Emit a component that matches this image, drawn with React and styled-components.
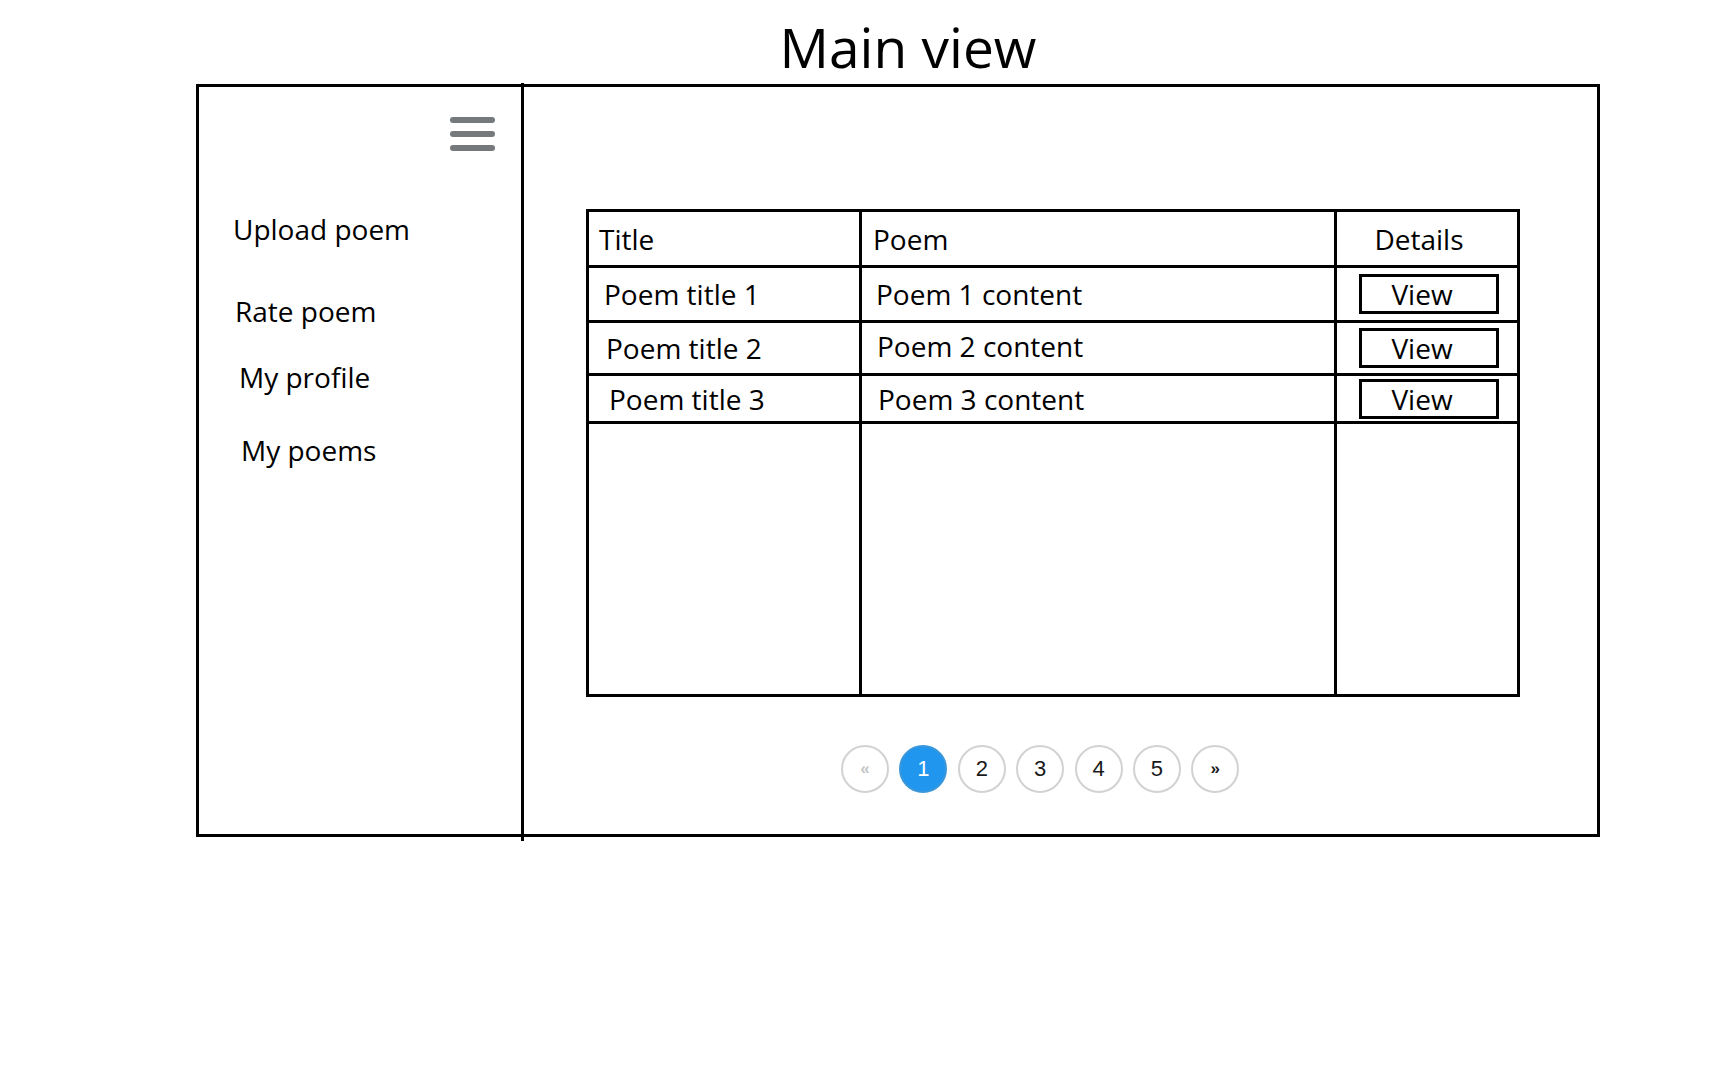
import React from "react";
import styled, { createGlobalStyle } from "styled-components";

const Global = createGlobalStyle`
  html, body { margin: 0; padding: 0; background: #ffffff; }
  body { font-family: "Open Sans", "Noto Sans", sans-serif; color: #000; }
`;

const Page = styled.div`
  width: 1730px;
  height: 1066px;
  padding-left: 196px;
  box-sizing: border-box;
  overflow: hidden;
`;

const Header = styled.h1`
  margin: 0;
  width: 1404px;
  box-sizing: border-box;
  padding: 9px 0 0 20px;
  text-align: center;
  font-weight: 400;
  font-size: 55px;
  line-height: 75px;
  color: #000;
`;

const Frame = styled.div`
  width: 1404px;
  height: 753px;
  box-sizing: border-box;
  border: 3px solid #000;
  display: flex;
`;

const Sidebar = styled.nav`
  width: 322px;
  flex: none;
  display: flex;
  flex-direction: column;
`;

const Divider = styled.div`
  width: 3px;
  flex: none;
  background: #000;
  margin-top: -4px;
  margin-bottom: -7px;
`;

const Burger = styled.button`
  align-self: flex-end;
  margin: 30px 26px 0 0;
  padding: 0;
  border: 0;
  background: none;
  width: 45px;
  display: flex;
  flex-direction: column;
  gap: 8px;
  cursor: pointer;
`;

const Bar = styled.span`
  display: block;
  height: 6px;
  border-radius: 3px;
  background: #75797c;
`;

const NavItem = styled.a`
  display: block;
  font-size: 28px;
  line-height: 38px;
  color: #000;
  text-decoration: none;
  margin-top: ${(p) => p.$top}px;
  margin-left: ${(p) => p.$left}px;
  white-space: nowrap;
`;

const Main = styled.main`
  flex: 1;
  display: flex;
  flex-direction: column;
  padding: 122px 0 0 62px;
`;

const Grid = styled.div`
  display: grid;
  grid-template-columns: 270px 472px 180px;
  grid-template-rows: 53px 52px 50px 45px 270px;
  gap: 3px;
  padding: 3px;
  width: 934px;
  box-sizing: border-box;
  background: #000;
`;

const Cell = styled.div`
  background: #fff;
  display: flex;
  align-items: center;
  justify-content: ${(p) => (p.$center ? "center" : "flex-start")};
  padding-left: ${(p) => p.$pad || 0}px;
  padding-right: ${(p) => p.$padR || 0}px;
  padding-bottom: ${(p) => p.$lift || 0}px;
  font-size: 28px;
  line-height: 38px;
  white-space: nowrap;
  min-width: 0;
`;

const ViewButton = styled.button`
  width: 140px;
  height: 40px;
  box-sizing: border-box;
  margin-left: 22px;
  border: 3px solid #000;
  background: #fff;
  font-family: "Open Sans", "Noto Sans", sans-serif;
  font-size: 28px;
  line-height: 32px;
  color: #000;
  padding: 0 14px 0 0;
  cursor: pointer;
`;

const Pager = styled.div`
  display: flex;
  gap: 10.4px;
  margin-top: 48px;
  padding-left: 255px;
`;

const PageDot = styled.button`
  width: 48px;
  height: 48px;
  box-sizing: border-box;
  border-radius: 50%;
  border: 2px solid ${(p) => (p.$active ? "#3a97da" : "#d2d2d2")};
  background: ${(p) => (p.$active ? "#2196ee" : "#fff")};
  color: ${(p) => (p.$active ? "#fff" : p.$muted ? "#c4c4c4" : "#1a1a1a")};
  font-family: "Liberation Sans", Arial, sans-serif;
  font-size: ${(p) => (p.$arrow ? "17px" : "22px")};
  font-weight: ${(p) => (p.$arrow ? 700 : 400)};
  padding: 0;
  display: flex;
  align-items: center;
  justify-content: center;
  cursor: pointer;
`;

const navItems = [
  { label: "Upload poem", top: 59, left: 34 },
  { label: "Rate poem", top: 44, left: 36 },
  { label: "My profile", top: 28, left: 40 },
  { label: "My poems", top: 35, left: 42 },
];

const rows = [
  { title: "Poem title 1", tPad: 15, content: "Poem 1 content", cPad: 14, lift: 0 },
  { title: "Poem title 2", tPad: 17, content: "Poem 2 content", cPad: 15, lift: 5 },
  { title: "Poem title 3", tPad: 20, content: "Poem 3 content", cPad: 16, lift: 0 },
];

export default function App() {
  return (
    <>
      <Global />
      <Page>
        <Header>Main view</Header>
        <Frame>
          <Sidebar>
            <Burger aria-label="Menu">
              <Bar />
              <Bar />
              <Bar />
            </Burger>
            {navItems.map((n) => (
              <NavItem key={n.label} href="#" $top={n.top} $left={n.left}>
                {n.label}
              </NavItem>
            ))}
          </Sidebar>
          <Divider />
          <Main>
            <Grid>
              <Cell $pad={10}>Title</Cell>
              <Cell $pad={11}>Poem</Cell>
              <Cell $center $padR={16}>Details</Cell>
              {rows.map((r) => (
                <React.Fragment key={r.title}>
                  <Cell $pad={r.tPad}>{r.title}</Cell>
                  <Cell $pad={r.cPad} $lift={r.lift}>{r.content}</Cell>
                  <Cell>
                    <ViewButton>View</ViewButton>
                  </Cell>
                </React.Fragment>
              ))}
              <Cell />
              <Cell />
              <Cell />
            </Grid>
            <Pager>
              <PageDot $arrow $muted>«</PageDot>
              <PageDot $active>1</PageDot>
              <PageDot>2</PageDot>
              <PageDot>3</PageDot>
              <PageDot>4</PageDot>
              <PageDot>5</PageDot>
              <PageDot $arrow>»</PageDot>
            </Pager>
          </Main>
        </Frame>
      </Page>
    </>
  );
}
